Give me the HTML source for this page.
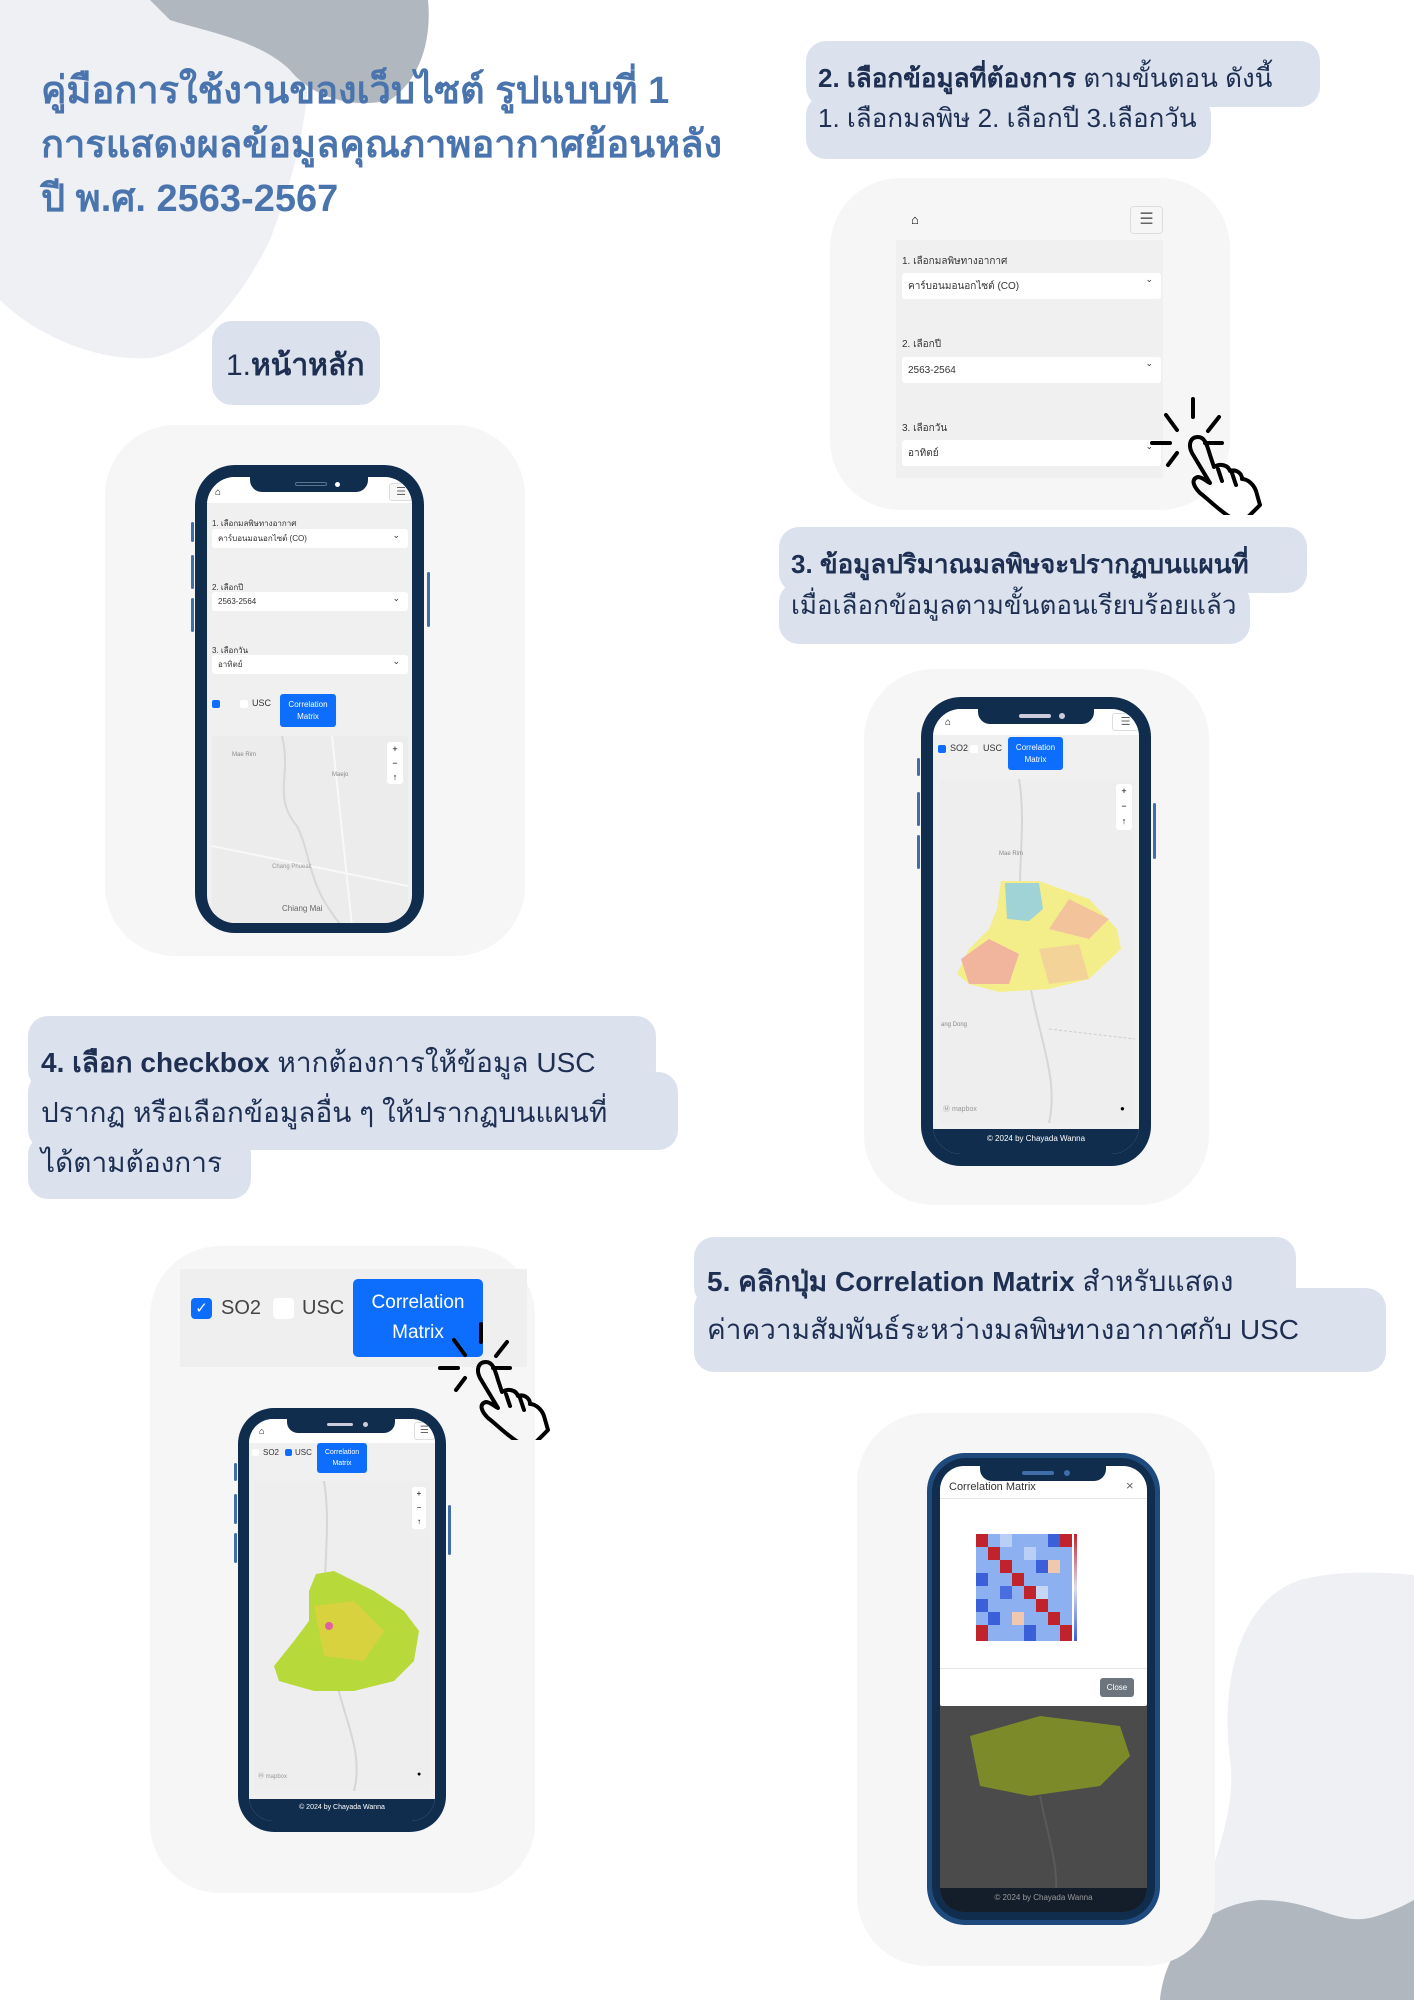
<!DOCTYPE html>
<html><head><meta charset="utf-8"><style>
*{margin:0;padding:0;box-sizing:border-box}
body{width:1414px;height:2000px;position:relative;overflow:hidden;background:#fff;font-family:"Liberation Sans","DejaVu Sans",sans-serif}
.a{position:absolute}
.bub{position:absolute;background:#dbe2ee;border-radius:20px}
.card{position:absolute;background:#f7f6f7;border-radius:70px}
.txt{position:absolute;white-space:nowrap;color:#1e2f52}
.phone{position:absolute;background:#112d4e;border-radius:40px}
.scr{position:absolute;background:#f0f0f0;border-radius:28px;overflow:hidden}
.sel{position:absolute;background:#fff;border-radius:3px;font-size:8px;color:#333;padding-left:6px;display:flex;align-items:center}
.sel:after{content:"⌄";position:absolute;right:8px;top:1px;font-size:9px}
.lbl{position:absolute;font-size:8px;color:#333}
.btn{position:absolute;background:#0d6efd;color:#fff;border-radius:3px;text-align:center;display:flex;align-items:center;justify-content:center}
.map{position:absolute;background:#ececec;overflow:hidden}
.side{position:absolute;background:#3f6ea8;width:3px;border-radius:2px}
</style></head><body>

<!-- background blobs -->
<svg class="a" style="left:0;top:0" width="1414" height="2000">
<path d="M0 0 H300 C320 80 300 160 270 240 C240 300 200 350 150 358 C90 362 30 330 0 300 Z" fill="#eef0f4"/>
<path d="M150 0 H428 C432 40 420 80 390 100 C350 110 310 95 290 70 C260 40 200 30 170 20 Z" fill="#b0b7bf"/>
<path d="M1414 1575 V2000 H1180 C1190 1900 1240 1830 1230 1760 C1220 1680 1240 1600 1300 1580 C1340 1570 1380 1572 1414 1575 Z" fill="#eef0f4"/>
<path d="M1160 2000 C1165 1950 1200 1905 1260 1900 C1320 1900 1340 1930 1380 1915 C1395 1910 1405 1905 1414 1900 V2000 Z" fill="#b0b7bf"/>
</svg>

<!-- title -->
<div class="txt" style="left:41px;top:64px;font-size:38px;font-weight:bold;color:#4a74ad;line-height:54px">คู่มือการใช้งานของเว็บไซต์ รูปแบบที่ 1<br>การแสดงผลข้อมูลคุณภาพอากาศย้อนหลัง<br>ปี พ.ศ. 2563-2567</div>

<!-- bubble 2 -->
<div class="bub" style="left:806px;top:41px;width:514px;height:66px"></div>
<div class="bub" style="left:806px;top:95px;width:405px;height:64px"></div>
<div class="txt" style="left:818px;top:58px;font-size:26px;line-height:40px"><b>2. เลือกข้อมูลที่ต้องการ</b> ตามขั้นตอน ดังนี้<br>1. เลือกมลพิษ 2. เลือกปี 3.เลือกวัน</div>

<!-- bubble 1 -->
<div class="bub" style="left:212px;top:321px;width:168px;height:84px"></div>
<div class="txt" style="left:226px;top:342px;font-size:30px"><span>1.</span><b>หน้าหลัก</b></div>

<!-- card 1 -->
<div class="card" style="left:105px;top:425px;width:420px;height:531px"></div>
<div class="side" style="left:191px;top:522px;height:20px"></div>
<div class="side" style="left:191px;top:555px;height:34px"></div>
<div class="side" style="left:191px;top:598px;height:34px"></div>
<div class="side" style="left:427px;top:572px;height:55px"></div>
<div class="phone" style="left:195px;top:465px;width:229px;height:468px"></div>
<div class="scr" style="left:207px;top:477px;width:205px;height:446px">
 <div class="a" style="left:0;top:0;width:205px;height:26px;background:#fff"></div>
 <div class="a" style="left:8px;top:10px;font-size:10px">⌂</div>
 <div class="a" style="left:182px;top:6px;width:24px;height:18px;border:1px solid #ddd;border-radius:3px;background:#f7f7f7;font-size:11px;color:#666;text-align:center;line-height:16px">☰</div>
 <div class="lbl" style="left:5px;top:40px">1. เลือกมลพิษทางอากาศ</div>
 <div class="sel" style="left:5px;top:52px;width:196px;height:19px">คาร์บอนมอนอกไซต์ (CO)</div>
 <div class="lbl" style="left:5px;top:104px">2. เลือกปี</div>
 <div class="sel" style="left:5px;top:115px;width:196px;height:19px">2563-2564</div>
 <div class="lbl" style="left:5px;top:167px">3. เลือกวัน</div>
 <div class="sel" style="left:5px;top:178px;width:196px;height:19px">อาทิตย์</div>
 <div class="a" style="left:5px;top:223px;width:8px;height:8px;background:#0d6efd;border-radius:2px"></div>
 <div class="a" style="left:33px;top:223px;width:8px;height:8px;background:#fff;border-radius:2px"></div>
 <div class="a" style="left:45px;top:221px;font-size:9px;color:#333">USC</div>
 <div class="btn" style="left:73px;top:217px;width:56px;height:33px;font-size:8px;line-height:12px">Correlation<br>Matrix</div>
 <div class="map" style="left:5px;top:259px;width:196px;height:190px">
  <svg width="196" height="190"><path d="M70 0 C80 40 60 60 85 90 C100 120 95 150 130 190" stroke="#d8d8d8" fill="none" stroke-width="2"/><path d="M0 110 L196 150 M120 0 L140 190" stroke="#f8f8f8" stroke-width="2"/></svg>
  <div class="a" style="left:20px;top:16px;font-size:6px;color:#888">Mae Rim</div>
  <div class="a" style="left:120px;top:36px;font-size:6px;color:#888">Maejo</div>
  <div class="a" style="left:60px;top:128px;font-size:6px;color:#999">Chang Phueak</div>
  <div class="a" style="left:70px;top:168px;font-size:8px;color:#666">Chiang Mai</div>
  <div class="a" style="left:175px;top:6px;width:16px;height:42px;background:#fff;border-radius:3px;font-size:9px;text-align:center;line-height:14px">+<br>−<br>↑</div>
 </div>
 <div class="a" style="left:43px;top:4px;width:118px;height:16px;background:#112d4e;border-radius:0 0 12px 12px;top:-1px"></div>
 <div class="a" style="left:88px;top:5px;width:32px;height:4px;border:1px solid #6a8;border-color:#5c7291;border-radius:3px"></div>
 <div class="a" style="left:128px;top:5px;width:5px;height:5px;background:#fff;border-radius:50%"></div>
</div>

<!-- card 2 -->
<div class="card" style="left:830px;top:178px;width:400px;height:332px"></div>
<div class="a" style="left:896px;top:204px;width:267px;height:274px;background:#f0f0f0"></div>
<div class="a" style="left:896px;top:204px;width:267px;height:36px;background:#f7f6f7"></div>
<div class="a" style="left:911px;top:212px;font-size:13px">⌂</div>
<div class="a" style="left:1130px;top:206px;width:33px;height:28px;border:1px solid #ddd;border-radius:4px;font-size:16px;color:#666;text-align:center;line-height:26px">☰</div>
<div class="lbl" style="left:902px;top:254px;font-size:10px">1. เลือกมลพิษทางอากาศ</div>
<div class="sel" style="left:902px;top:273px;width:259px;height:26px;font-size:10px">คาร์บอนมอนอกไซต์ (CO)</div>
<div class="lbl" style="left:902px;top:337px;font-size:10px">2. เลือกปี</div>
<div class="sel" style="left:902px;top:357px;width:259px;height:26px;font-size:10px">2563-2564</div>
<div class="lbl" style="left:902px;top:421px;font-size:10px">3. เลือกวัน</div>
<div class="sel" style="left:902px;top:440px;width:259px;height:26px;font-size:10px">อาทิตย์</div>
<svg class="a" style="left:1150px;top:395px" width="120" height="120" viewBox="0 0 120 120">
<g stroke="#000" stroke-width="4" fill="none" stroke-linecap="round">
<path d="M43 4 V22 M16 20 L27 35 M69 22 L58 36 M2 48 H20 M55 48 H72 M18 70 L27 58"/>
<path d="M42 58 C38 50 40 42 48 42 C55 42 57 50 60 60 L64 72 C70 68 78 70 80 76 C86 74 92 78 92 84 C98 84 104 90 106 96 L110 110 L98 122 L80 122 C70 116 58 104 50 98 C44 92 40 84 48 82 C52 82 56 86 60 88 Z" stroke-linejoin="round"/>
<path d="M68 74 L72 86 M82 78 L86 90"/>
</g></svg>

<!-- bubble 3 -->
<div class="bub" style="left:779px;top:527px;width:528px;height:66px"></div>
<div class="bub" style="left:779px;top:582px;width:471px;height:62px"></div>
<div class="txt" style="left:791px;top:544px;font-size:26px;line-height:41px"><b>3. ข้อมูลปริมาณมลพิษจะปรากฏบนแผนที่</b><br>เมื่อเลือกข้อมูลตามขั้นตอนเรียบร้อยแล้ว</div>

<!-- card 3 -->
<div class="card" style="left:864px;top:669px;width:345px;height:536px"></div>
<div class="side" style="left:917px;top:758px;height:18px"></div>
<div class="side" style="left:917px;top:792px;height:34px"></div>
<div class="side" style="left:917px;top:835px;height:34px"></div>
<div class="side" style="left:1153px;top:803px;height:56px"></div>
<div class="phone" style="left:921px;top:697px;width:230px;height:469px"></div>
<div class="scr" style="left:933px;top:709px;width:206px;height:445px">
 <div class="a" style="left:0;top:0;width:206px;height:26px;background:#fff"></div>
 <div class="a" style="left:12px;top:8px;font-size:10px">⌂</div>
 <div class="a" style="left:179px;top:4px;width:27px;height:18px;border:1px solid #ddd;border-radius:3px;font-size:11px;color:#666;text-align:center;line-height:16px">☰</div>
 <div class="a" style="left:5px;top:36px;width:8px;height:8px;background:#0d6efd;border-radius:2px"></div>
 <div class="a" style="left:17px;top:34px;font-size:9px;color:#333">SO2</div>
 <div class="a" style="left:37px;top:36px;width:8px;height:8px;background:#fff;border-radius:2px"></div>
 <div class="a" style="left:50px;top:34px;font-size:9px;color:#333">USC</div>
 <div class="btn" style="left:75px;top:28px;width:55px;height:33px;font-size:8px;line-height:12px">Correlation<br>Matrix</div>
 <div class="map" style="left:6px;top:70px;width:196px;height:344px;background:#eeeeee">
  <svg width="196" height="344"><path d="M80 0 C90 60 70 120 90 200 C100 260 120 300 110 344" stroke="#d6d6d6" fill="none" stroke-width="2"/><path d="M110 250 L196 260" stroke="#ccc" stroke-dasharray="3 2"/>
  <path d="M62 102 L100 102 L150 120 L178 150 L182 170 L150 200 L110 210 L60 213 L30 205 L18 195 L30 170 L50 150 L58 130 Z" fill="#f4ee8a"/>
  <path d="M66 104 L100 104 L104 130 L90 142 L68 140 Z" fill="#9fd3d6"/>
  <path d="M22 180 L50 160 L80 175 L70 205 L30 205 Z" fill="#f0a5a0" opacity=".8"/>
  <path d="M130 120 L170 140 L150 160 L110 150 Z" fill="#f2b8a0" opacity=".8"/>
  <path d="M100 170 L140 165 L150 200 L110 205 Z" fill="#f4c8a0" opacity=".7"/>
  </svg>
  <div class="a" style="left:60px;top:72px;font-size:6px;color:#888">Mae Rim</div>
  <div class="a" style="left:2px;top:243px;font-size:6px;color:#888">ang Dong</div>
  <div class="a" style="left:4px;top:366px;font-size:6px;color:#888">mapbox</div>
  <div class="a" style="left:4px;top:325px;font-size:7px;color:#999">Ⓜ mapbox</div>
  <div class="a" style="left:181px;top:325px;font-size:8px">●</div>
  <div class="a" style="left:177px;top:5px;width:16px;height:46px;background:#fff;border-radius:3px;font-size:9px;text-align:center;line-height:15px">+<br>−<br>↑</div>
 </div>
 <div class="a" style="left:0;top:420px;width:206px;height:25px;background:#112d4e;color:#fff;font-size:8px;text-align:center;line-height:20px">© 2024 by Chayada Wanna</div>
 <div class="a" style="left:45px;top:-1px;width:116px;height:16px;background:#112d4e;border-radius:0 0 12px 12px"></div>
 <div class="a" style="left:86px;top:5px;width:32px;height:4px;background:#ccd;border-radius:3px"></div>
 <div class="a" style="left:126px;top:4px;width:6px;height:6px;background:#ccd;border-radius:50%"></div>
</div>

<!-- bubble 4 -->
<div class="bub" style="left:28px;top:1016px;width:628px;height:74px"></div>
<div class="bub" style="left:28px;top:1072px;width:650px;height:78px"></div>
<div class="bub" style="left:28px;top:1135px;width:223px;height:64px"></div>
<div class="txt" style="left:41px;top:1038px;font-size:28px;line-height:50px"><b>4. เลือก checkbox</b> หากต้องการให้ข้อมูล USC<br>ปรากฏ หรือเลือกข้อมูลอื่น ๆ ให้ปรากฏบนแผนที่<br>ได้ตามต้องการ</div>

<!-- card 4 -->
<div class="card" style="left:150px;top:1246px;width:385px;height:647px"></div>
<div class="a" style="left:180px;top:1269px;width:347px;height:98px;background:#efefef"></div>
<div class="a" style="left:191px;top:1298px;width:21px;height:21px;background:#0d6efd;border-radius:4px;color:#fff;font-size:15px;text-align:center;line-height:21px">✓</div>
<div class="a" style="left:221px;top:1297px;font-size:20px;color:#444">SO2</div>
<div class="a" style="left:273px;top:1298px;width:21px;height:21px;background:#fff;border-radius:4px"></div>
<div class="a" style="left:302px;top:1297px;font-size:20px;color:#444">USC</div>
<div class="btn" style="left:353px;top:1279px;width:130px;height:78px;font-size:19px;line-height:30px;border-radius:5px">Correlation<br>Matrix</div>
<svg class="a" style="left:438px;top:1320px" width="120" height="120" viewBox="0 0 120 120">
<g stroke="#000" stroke-width="4" fill="none" stroke-linecap="round">
<path d="M43 4 V22 M16 20 L27 35 M69 22 L58 36 M2 48 H20 M55 48 H72 M18 70 L27 58"/>
<path d="M42 58 C38 50 40 42 48 42 C55 42 57 50 60 60 L64 72 C70 68 78 70 80 76 C86 74 92 78 92 84 C98 84 104 90 106 96 L110 110 L98 122 L80 122 C70 116 58 104 50 98 C44 92 40 84 48 82 C52 82 56 86 60 88 Z" stroke-linejoin="round"/>
<path d="M68 74 L72 86 M82 78 L86 90"/>
</g></svg>
<div class="side" style="left:234px;top:1463px;height:18px"></div>
<div class="side" style="left:234px;top:1494px;height:30px"></div>
<div class="side" style="left:234px;top:1533px;height:30px"></div>
<div class="side" style="left:448px;top:1505px;height:50px"></div>
<div class="phone" style="left:238px;top:1408px;width:208px;height:424px;border-radius:36px"></div>
<div class="scr" style="left:249px;top:1419px;width:186px;height:402px;border-radius:24px">
 <div class="a" style="left:0;top:0;width:186px;height:24px;background:#fff"></div>
 <div class="a" style="left:10px;top:7px;font-size:9px">⌂</div>
 <div class="a" style="left:165px;top:3px;width:21px;height:18px;border:1px solid #ddd;border-radius:3px;font-size:10px;color:#666;text-align:center;line-height:16px">☰</div>
 <div class="a" style="left:3px;top:30px;width:7px;height:7px;background:#fff;border-radius:2px"></div>
 <div class="a" style="left:14px;top:29px;font-size:8px;color:#333">SO2</div>
 <div class="a" style="left:36px;top:30px;width:7px;height:7px;background:#0d6efd;border-radius:2px"></div>
 <div class="a" style="left:46px;top:29px;font-size:8px;color:#333">USC</div>
 <div class="btn" style="left:68px;top:24px;width:50px;height:30px;font-size:7px;line-height:11px">Correlation<br>Matrix</div>
 <div class="map" style="left:5px;top:62px;width:176px;height:310px;background:#eeeeee">
  <svg width="176" height="310"><path d="M70 0 C80 60 60 120 80 190 C90 240 110 270 100 310" stroke="#d6d6d6" fill="none" stroke-width="2"/>
  <path d="M62 93 L80 90 L120 110 L150 130 L165 150 L160 180 L140 200 L100 210 L60 210 L25 200 L20 185 L40 160 L55 140 L55 110 Z" fill="#b8d93a"/>
  <path d="M60 125 L100 120 L130 150 L110 180 L70 175 Z" fill="#e0cf40" opacity=".8"/>
  <circle cx="75" cy="145" r="4" fill="#e060a0"/>
  </svg>
  <div class="a" style="left:158px;top:6px;width:14px;height:42px;background:#fff;border-radius:3px;font-size:8px;text-align:center;line-height:14px">+<br>−<br>↑</div>
  <div class="a" style="left:4px;top:290px;font-size:6px;color:#999">Ⓜ mapbox</div>
  <div class="a" style="left:163px;top:290px;font-size:7px">●</div>
 </div>
 <div class="a" style="left:0;top:380px;width:186px;height:22px;background:#112d4e;color:#fff;font-size:7px;text-align:center;line-height:18px">© 2024 by Chayada Wanna</div>
 <div class="a" style="left:38px;top:-1px;width:108px;height:15px;background:#112d4e;border-radius:0 0 11px 11px"></div>
 <div class="a" style="left:78px;top:4px;width:26px;height:3px;background:#ccd;border-radius:3px"></div>
 <div class="a" style="left:114px;top:3px;width:5px;height:5px;background:#ccd;border-radius:50%"></div>
</div>

<!-- bubble 5 -->
<div class="bub" style="left:694px;top:1237px;width:602px;height:70px"></div>
<div class="bub" style="left:694px;top:1288px;width:692px;height:84px"></div>
<div class="txt" style="left:707px;top:1258px;font-size:28px;line-height:48px"><b>5. คลิกปุ่ม Correlation Matrix</b> สำหรับแสดง<br>ค่าความสัมพันธ์ระหว่างมลพิษทางอากาศกับ USC</div>

<!-- card 5 -->
<div class="card" style="left:857px;top:1413px;width:358px;height:553px"></div>
<div class="phone" style="left:927px;top:1453px;width:233px;height:472px;background:#1e4a7e;border-radius:38px"></div>
<div class="a" style="left:932px;top:1458px;width:223px;height:462px;background:#112d4e;border-radius:34px"></div>
<div class="scr" style="left:940px;top:1466px;width:207px;height:446px;background:#4b4b4b;border-radius:24px">
 <svg class="a" style="left:0;top:0" width="207" height="446">
 <path d="M30 270 L100 250 L180 260 L190 290 L160 320 L90 330 L40 320 Z" fill="#7d8a2a"/>
 <path d="M100 330 C110 380 120 400 115 446" stroke="#5a5a5a" fill="none" stroke-width="2"/>
 </svg>
 <div class="a" style="left:0;top:0;width:207px;height:240px;background:#fff;border-radius:0 0 2px 2px"></div>
 <div class="a" style="left:9px;top:15px;font-size:11px;color:#333">Correlation Matrix</div>
 <div class="a" style="left:186px;top:12px;font-size:13px;color:#666">×</div>
 <div class="a" style="left:0;top:32px;width:207px;height:1px;background:#e5e5e5"></div>
 <div class="a" style="left:0;top:202px;width:207px;height:1px;background:#e5e5e5"></div>
 <svg class="a" style="left:30px;top:62px" width="110" height="120" viewBox="0 0 110 120">
  <g>
  <rect x="0" y="0" width="110" height="120" fill="#fff"/>
  <rect x="6" y="6" width="96" height="107" fill="#8db0f0"/>
  <rect x="6" y="6" width="12" height="13" fill="#c0232c"/><rect x="18" y="19" width="12" height="13" fill="#c0232c"/><rect x="30" y="32" width="12" height="13" fill="#c0232c"/><rect x="42" y="45" width="12" height="13" fill="#c0232c"/><rect x="54" y="58" width="12" height="13" fill="#c0232c"/><rect x="66" y="71" width="12" height="13" fill="#c0232c"/><rect x="78" y="84" width="12" height="13" fill="#c0232c"/><rect x="90" y="97" width="12" height="16" fill="#c0232c"/>
  <rect x="90" y="6" width="12" height="13" fill="#c0232c"/><rect x="6" y="97" width="12" height="16" fill="#c0232c"/>
  <rect x="6" y="45" width="12" height="13" fill="#3b5fd8"/><rect x="30" y="58" width="12" height="13" fill="#4a6ee0"/><rect x="54" y="19" width="12" height="13" fill="#b9cff5"/><rect x="66" y="32" width="12" height="13" fill="#3b5fd8"/><rect x="78" y="6" width="12" height="13" fill="#3b5fd8"/><rect x="18" y="84" width="12" height="13" fill="#3b5fd8"/><rect x="42" y="84" width="12" height="13" fill="#f0c8b0"/><rect x="78" y="32" width="12" height="13" fill="#f0c8b0"/><rect x="6" y="71" width="12" height="13" fill="#3b5fd8"/><rect x="54" y="97" width="12" height="16" fill="#3b5fd8"/><rect x="66" y="58" width="12" height="13" fill="#c6d6f5"/><rect x="30" y="6" width="12" height="13" fill="#b9cff5"/>
  <rect x="104" y="6" width="3" height="107" fill="url(#cb)"/>
  </g>
  <defs><linearGradient id="cb" x1="0" y1="0" x2="0" y2="1"><stop offset="0" stop-color="#c0232c"/><stop offset=".5" stop-color="#dde"/><stop offset="1" stop-color="#3b5fd8"/></linearGradient></defs>
 </svg>
 <div class="a" style="left:160px;top:212px;width:34px;height:19px;background:#6c757d;border-radius:3px;color:#fff;font-size:8px;text-align:center;line-height:19px">Close</div>
 <div class="a" style="left:0;top:422px;width:207px;height:24px;background:#141e2a;color:#999;font-size:8px;text-align:center;line-height:20px">© 2024 by Chayada Wanna</div>
 <div class="a" style="left:40px;top:-1px;width:126px;height:16px;background:#112d4e;border-radius:0 0 12px 12px"></div>
 <div class="a" style="left:82px;top:5px;width:32px;height:4px;background:#3f6ea8;border-radius:3px"></div>
 <div class="a" style="left:124px;top:4px;width:6px;height:6px;background:#3f6ea8;border-radius:50%"></div>
</div>

</body></html>
